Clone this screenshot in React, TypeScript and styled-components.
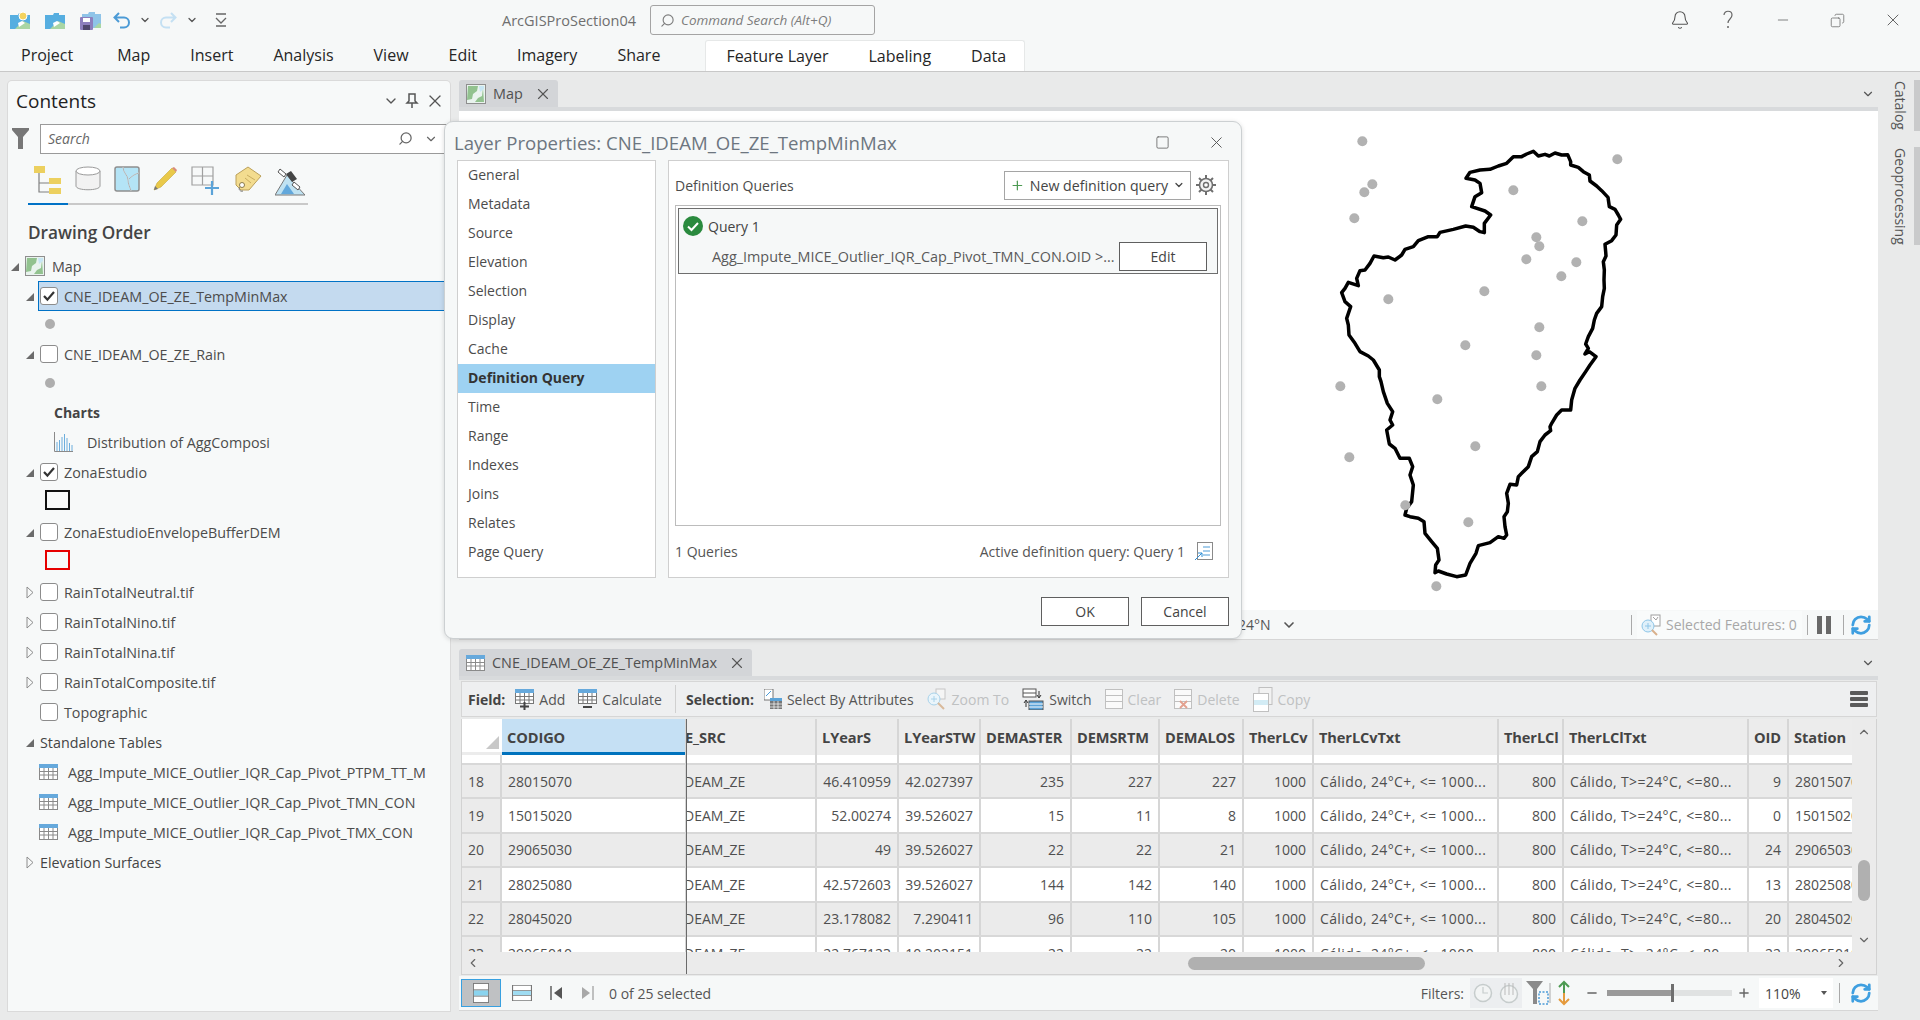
import React from "react";
import styled, { createGlobalStyle } from "styled-components";
import { Bell, ChevronDown, ChevronUp, ChevronLeft, ChevronRight, X, Search, Minus, Plus, RefreshCw, Square, Copy } from "lucide-react";

const GlobalStyle = createGlobalStyle`
  html, body { margin: 0; padding: 0; overflow: hidden; background: #e9eaea; }
  * { box-sizing: border-box; }
  body { font-family: "Open Sans", "Noto Sans", "Liberation Sans", sans-serif; font-size: 14px; color: #4c4c4c; }
`;

const Shell = styled.div`position: relative; width: 1920px; height: 1020px; display: flex; flex-direction: column; background: #e9eaea; overflow: hidden;`;

/* ---------- title bar and ribbon ---------- */
const TitleBar = styled.div`height: 40px; display: flex; align-items: center; background: #f6f8f8; padding-left: 10px;`;
const QuickAccess = styled.div`width: 492px; display: flex; align-items: center; gap: 15px;`;
const SmallCaret = styled.span<{ $ml?: number }>`display: flex; margin-left: ${(p) => p.$ml ?? 0}px; color: #555;`;
const ProjectName = styled.div`width: 148px; font-size: 14.5px; color: #6f6f6f; white-space: nowrap;`;
const CommandSearch = styled.div`width: 225px; height: 30px; display: flex; align-items: center; gap: 6px; padding-left: 9px; border: 1px solid #a4a4a4; border-radius: 3px; font-size: 13.5px; font-style: italic; color: #7d7d7d; white-space: nowrap;`;
const WindowButtons = styled.div`margin-left: auto; display: flex; align-items: center; color: #666;`;
const WindowButton = styled.span<{ $w: number }>`width: ${(p) => p.$w}px; display: flex; justify-content: center;`;

const Ribbon = styled.div`height: 32px; display: flex; align-items: flex-end; gap: 40px; padding-left: 21px; background: #f6f8f8; border-bottom: 1px solid #c8c8c8;`;
const RibbonTab = styled.div<{ $mr?: number }>`height: 31px; line-height: 31px; font-size: 16px; color: #262626; margin-right: ${(p) => p.$mr ?? 0}px;`;
const ContextGroup = styled.div`height: 31px; display: flex; gap: 40px; margin-left: 5px; padding: 0 18px 0 20px; background: #fff; border: 1px solid #e6e8e8; border-bottom: 0; border-radius: 3px 3px 0 0;`;

/* ---------- body ---------- */
const Body = styled.div`flex: 1; display: flex; gap: 9px; padding: 8px 0 9px 8px; min-height: 0;`;

/* ---------- contents pane ---------- */
const ContentsPane = styled.div`width: 442px; flex: none; margin-top: 1px; display: flex; flex-direction: column; background: #f7f9f9; border-radius: 4px 4px 0 0; box-shadow: 0 0 0 1px #dadada;`;
const PaneHeader = styled.div`height: 40px; display: flex; align-items: center; padding: 0 5px 0 8px; font-size: 19px; color: #222;`;
const PaneTitle = styled.div`flex: 1;`;
const PaneIcons = styled.div`display: flex; align-items: center; gap: 6px; color: #555;`;
const SearchRow = styled.div`height: 31px; margin-top: 2px; display: flex; align-items: center; padding-left: 4px; gap: 11px;`;
const SearchBox = styled.div`flex: 1; height: 30px; display: flex; align-items: center; padding: 0 11px 0 7px; background: #fff; border: 1px solid #9a9a9a; font-style: italic; font-size: 14px; color: #666;`;
const SearchLabel = styled.span`flex: 1;`;
const ViewTabs = styled.div`margin: 12px 0 0 20px; width: 280px; display: flex; gap: 13px; padding: 0 0 7px 6px; border-bottom: 2px solid #c9c9c9; position: relative;`;
const ViewTabMarker = styled.div`position: absolute; left: 0; bottom: -2px; width: 40px; height: 2px; background: #0072c6;`;
const Heading = styled.div`margin: 17px 0 0 20px; height: 22px; line-height: 22px; font-size: 17.2px; font-weight: 600; color: #444;`;
const Tree = styled.div`margin-top: 7px; display: flex; flex-direction: column;`;
const TreeRow = styled.div<{ $h?: number; $pl?: number }>`height: ${(p) => p.$h ?? 30}px; display: flex; align-items: center; padding-left: ${(p) => p.$pl ?? 17}px; white-space: nowrap; font-size: 14.3px; color: #4c4c4c;`;
const Expander = styled.span`width: 15px; flex: none; display: flex; align-items: center;`;
const RowBody = styled.div<{ $selected?: boolean }>`flex: 1; height: ${(p) => (p.$selected ? "30px" : "auto")}; display: flex; align-items: center; gap: 6px; margin-left: ${(p) => (p.$selected ? "-2px" : "0")}; padding-left: ${(p) => (p.$selected ? "1px" : "0")}; background: ${(p) => (p.$selected ? "#c4daef" : "transparent")}; border: ${(p) => (p.$selected ? "1px solid #0072c6" : "0")}; border-right: 0;`;
const CheckBox = styled.span`width: 18px; height: 18px; flex: none; display: flex; align-items: center; justify-content: center; background: #fff; border: 1px solid #8c8c8c; border-radius: 3px;`;
const GroupLabel = styled.span`font-weight: 500; color: #444;`;
const BoldLabel = styled.span`margin-left: 29px; font-size: 14px; font-weight: 700; color: #444;`;
const PointSymbol = styled.span`width: 10px; height: 10px; margin-left: 20px; border-radius: 50%; background: #aeaeae;`;
const FillSymbol = styled.span<{ $c: string }>`width: 25px; height: 20px; margin: -4px 0 0 20px; border: 2.5px solid ${(p) => p.$c};`;
const ItemLabelWithIcon = styled.span<{ $gap: number }>`display: flex; align-items: center; gap: ${(p) => p.$gap}px;`;

/* ---------- main column ---------- */
const MainColumn = styled.div`width: 1419px; flex: none; display: flex; flex-direction: column; gap: 9px;`;
const DockPane = styled.div`display: flex; flex-direction: column;`;
const TabRow = styled.div`height: 27px; display: flex; align-items: stretch; justify-content: space-between;`;
const DockTab = styled.div`display: flex; align-items: center; gap: 7px; padding: 0 6px 0 7px; background: #d3d5d8; border-radius: 3px 3px 0 0; font-size: 14.4px; color: #505050; white-space: nowrap;`;
const TabClose = styled.span`display: flex; margin-left: 4px; color: #555;`;
const TabMenu = styled.span`display: flex; align-items: center; padding-right: 3px; color: #555;`;
const TabStrip = styled.div`height: 4px; background: #d8dadc;`;
const MapView = styled.div`position: relative; height: 499px; background: #fff;`;
const MapDrawing = styled.svg`position: absolute; left: 841px; top: 9px;`;
const MapStatus = styled.div`height: 30px; display: flex; align-items: center; background: #f6f8f8; border-bottom: 1px solid #d6d6d6; padding-left: 779px; color: #555;`;
const CoordText = styled.span`width: 31px; white-space: nowrap;`;
const CoordMenu = styled.span`display: flex; margin-left: 12px; color: #555;`;
const StatusSep = styled.span<{ $ml?: number; $mr?: number }>`width: 1px; height: 20px; background: #a9a9a9; margin-left: ${(p) => p.$ml ?? 0}px; margin-right: ${(p) => p.$mr ?? 0}px;`;
const SelectedBox = styled.div`width: 165px; height: 28px; display: flex; align-items: center; gap: 5px; padding-left: 4px; background: #f9fbfb; color: #a8a8a8; white-space: nowrap;`;
const PauseBars = styled.span`display: flex; gap: 4px; margin-right: 12px;`;
const PauseBar = styled.span`width: 5px; height: 18px; background: #696969;`;

/* ---------- attribute table ---------- */
const Toolbar = styled.div`height: 36px; margin: 1px 1px 0 2px; display: flex; align-items: center; padding: 0 8px 0 6px; gap: 13px; background: #eeeff0; border: 1px solid #d6d6d6; white-space: nowrap;`;
const ToolLabel = styled.span`font-weight: 700; color: #444; margin-right: -3px;`;
const ToolButton = styled.span<{ $off?: boolean }>`display: flex; align-items: center; gap: 5px; color: ${(p) => (p.$off ? "#bfc1c2" : "#555")};`;
const ToolSep = styled.span`width: 1px; height: 28px; background: #d0d0d0; margin: 0 -3px 0 0;`;
const MenuLines = styled.span`margin-left: auto; display: flex; flex-direction: column; gap: 2px;`;
const MenuLine = styled.span`width: 18px; height: 4px; border-radius: 1px; background: #5a5a5a;`;

const GridFrame = styled.div`position: relative; height: 256px; margin: 2px 1px 0 2px; background: #ebebeb; border: 1px solid #d2d2d2; display: flex; flex-direction: column; border-top: 0;`;
const GridTop = styled.div`height: 233px; display: flex;`;
const GridBody = styled.div`width: 1392px; height: 233px; overflow: hidden;`;
const columns = "40px 185px 130px 82px 82px 91px 88px 84px 70px 185px 65px 185px 40px 65px";
const HeaderRow = styled.div`height: 36px; display: grid; grid-template-columns: ${columns}; background: #ececec;`;
const HeaderCell = styled.div<{ $active?: boolean; $clip?: boolean }>`display: flex; align-items: center; padding-left: 5px; padding-bottom: 1px; overflow: hidden; white-space: nowrap; font-size: 14.6px; font-weight: 700; color: #444; letter-spacing: -0.1px; border-right: 2px solid #d6d6d6; background: ${(p) => (p.$active ? "#c5e0f4" : "transparent")}; box-shadow: ${(p) => (p.$active ? "inset 0 -3px 0 #0072bd" : "none")}; text-indent: ${(p) => (p.$clip ? "-7px" : "0")};`;
const CornerCell = styled.div`position: relative; background: #fff; border-bottom: 3px solid #ececec;`;
const CornerMark = styled.span`position: absolute; right: 3px; bottom: 3px; border-style: solid; border-width: 0 0 13px 13px; border-color: transparent transparent #c8c8c8 transparent;`;
const Band = styled.div`height: 10px; display: grid; grid-template-columns: ${columns}; background: #fff; border-bottom: 2px solid #d8d8d8;`;
const BandCell = styled.div`border-right: 2px solid #d6d6d6;`;
const Row = styled.div<{ $odd: boolean }>`height: 34.4px; display: grid; grid-template-columns: ${columns}; background: ${(p) => (p.$odd ? "#ebebeb" : "#fff")}; border-bottom: 2px solid #d8d8d8;`;
const Cell = styled.div<{ $right?: boolean; $clip?: boolean; $head?: boolean; $wide?: boolean }>`display: flex; align-items: center; justify-content: ${(p) => (p.$right ? "flex-end" : "flex-start")}; padding: 0 6px; overflow: hidden; white-space: nowrap; color: #4f4f4f; border-right: 2px solid #d6d6d6; background: ${(p) => (p.$head ? "#ebebeb" : "transparent")}; text-indent: ${(p) => (p.$clip ? "-9px" : "0")}; letter-spacing: ${(p) => (p.$wide ? "0.38px" : "0")};`;
const VScroll = styled.div`width: 24px; display: flex; flex-direction: column; align-items: center; color: #666;`;
const VThumb = styled.div`width: 12px; height: 41px; margin-top: 121px; border-radius: 6px; background: #b0b0b0;`;
const VBottom = styled.span`display: flex; margin-top: 32px;`;
const VTop = styled.span`display: flex; margin-top: 6px;`;
const HScroll = styled.div`height: 22px; display: flex; align-items: center; padding-left: 4px; color: #666;`;
const HThumb = styled.div`width: 237px; height: 13px; margin-left: 708px; border-radius: 7px; background: #b0b0b0;`;
const HArrow = styled.span<{ $ml: number }>`display: flex; margin-left: ${(p) => p.$ml}px;`;
const FreezeLine = styled.div`position: absolute; left: 224px; top: 0; bottom: 0; width: 1px; background: #6a6a6a;`;

const TableStatus = styled.div`height: 35px; margin-top: 1px; display: flex; align-items: center; padding-left: 2px; background: #f6f8f8; border-bottom: 1px solid #d6d6d6; color: #555; white-space: nowrap;`;
const ViewToggle = styled.span`width: 40px; height: 28px; display: flex; align-items: center; justify-content: center; background: #bfc1c3; border: 1px solid #38a0e0;`;
const NavGroup = styled.span`display: flex; align-items: center; gap: 18px; margin-left: 11px;`;
const SelectionCount = styled.span`margin-left: 15px;`;
const FiltersLabel = styled.span`margin-left: auto;`;
const FilterPad = styled.span`width: 52px; height: 30px; margin-left: 6px; display: flex; align-items: center; justify-content: center; gap: 6px; background: #eceef0;`;
const ZoomSign = styled.span<{ $ml: number }>`display: flex; margin-left: ${(p) => p.$ml}px; color: #666;`;
const Slider = styled.span`position: relative; width: 125px; height: 6px; margin-left: 8px; background: #e0e2e2;`;
const SliderFill = styled.span`position: absolute; left: 0; top: 0; bottom: 0; background: #9a9a9a;`;
const SliderThumb = styled.span`position: absolute; top: -6px; width: 3px; height: 18px; background: #6f6f6f;`;
const ZoomBox = styled.span`width: 74px; height: 30px; margin-left: 8px; padding: 0 6px; display: flex; align-items: center; justify-content: space-between; background: #fff; color: #444;`;
const Caret = styled.span`width: 0; height: 0; border-left: 3px solid transparent; border-right: 3px solid transparent; border-top: 4px solid #555;`;

/* ---------- right dock ---------- */
const SideDock = styled.div`width: 33px; flex: none; display: flex; flex-direction: column; gap: 16px;`;
const SideTab = styled.div<{ $h: number }>`height: ${(p) => p.$h}px; display: flex; align-items: center; justify-content: center; border-right: 6px solid #c9cacb; writing-mode: vertical-rl; font-size: 14px; color: #555; white-space: nowrap;`;

/* ---------- dialog ---------- */
const Dialog = styled.div`position: absolute; left: 444px; top: 121px; width: 798px; height: 518px; display: flex; flex-direction: column; background: #f6f8f8; border: 1px solid #ccd0d2; border-radius: 9px; box-shadow: 0 1px 5px rgba(0,0,0,.14);`;
const DialogHeader = styled.div`height: 38px; display: flex; align-items: center; padding: 3px 15px 0 9px;`;
const DialogTitle = styled.div`flex: 1; font-size: 18.6px; color: #6d7680; white-space: nowrap;`;
const DialogTool = styled.span<{ $mr: number }>`display: flex; margin-right: ${(p) => p.$mr}px; color: #555;`;
const DialogBody = styled.div`height: 418px; display: flex; gap: 12px; padding: 0 12px;`;
const PageList = styled.div`width: 199px; display: flex; flex-direction: column; background: #fff; border: 1px solid #cfcfcf;`;
const PageItem = styled.div<{ $active?: boolean }>`height: 29px; flex: none; display: flex; align-items: center; padding: 0 0 2px 10px; color: ${(p) => (p.$active ? "#333" : "#4c4c4c")}; font-weight: ${(p) => (p.$active ? 700 : 400)}; background: ${(p) => (p.$active ? "#9ed2f2" : "transparent")};`;
const PagePanel = styled.div`flex: 1; display: flex; flex-direction: column; background: #fff; border: 1px solid #cfcfcf;`;
const PanelHead = styled.div`height: 44px; display: flex; align-items: center; padding: 4px 12px 0 6px;`;
const PanelTitle = styled.div`flex: 1;`;
const NewQueryButton = styled.div`width: 187px; height: 29px; display: flex; align-items: center; padding: 0 5px 0 5px; gap: 5px; background: #fff; border: 1px solid #a5a5a5; white-space: nowrap; color: #444;`;
const ButtonText = styled.span`flex: 1; font-size: 14.2px;`;
const GearWrap = styled.span`display: flex; margin-left: 5px;`;
const QueryBox = styled.div`height: 321px; margin: 0 7px 0 6px; padding: 2px; border: 1px solid #bcbcbc;`;
const QueryCard = styled.div`height: 66px; display: flex; flex-direction: column; padding: 0 10px 0 4px; background: #f6f8f8; border: 1px solid #6e6e6e;`;
const QueryTitleRow = styled.div`height: 32px; display: flex; align-items: center; gap: 5px; padding-top: 2px; font-weight: 500; color: #444;`;
const QueryTextRow = styled.div`height: 30px; display: flex; align-items: center; padding-left: 29px; font-size: 14.4px; color: #5a5a5a; white-space: nowrap;`;
const QueryText = styled.span`flex: 1;`;
const PlainButton = styled.div<{ $w: number }>`width: ${(p) => p.$w}px; height: 29px; flex: none; display: flex; align-items: center; justify-content: center; background: #fff; border: 1px solid #5f5f5f; font-size: 14px; color: #444;`;
const PanelFoot = styled.div`flex: 1; display: flex; align-items: center; justify-content: space-between; padding: 0 14px 0 6px; color: #555;`;
const ActiveQuery = styled.span`display: flex; align-items: center; gap: 9px;`;
const DialogFoot = styled.div`flex: 1; display: flex; justify-content: flex-end; gap: 12px; padding: 19px 12px 0 0;`;

/* ---------- drawings ---------- */
const ArrowDown = () => (
  <svg width="11" height="11" viewBox="0 0 11 11"><path d="M9 2v8H1z" fill="#6b6b6b" /></svg>
);
const ArrowRight = () => (
  <svg width="10" height="13" viewBox="0 0 10 13"><path d="M2 1l6 5.5L2 12z" fill="#f7f9f9" stroke="#8c8c8c" /></svg>
);
const Check = () => (
  <svg width="14" height="12" viewBox="0 0 14 12"><path d="M2 6l3.4 3.6L12 2" fill="none" stroke="#333" strokeWidth="2.2" /></svg>
);
const TableIcon = ({ w = 19, h = 16 }: { w?: number; h?: number }) => (
  <svg width={w} height={h} viewBox="0 0 19 16">
    <rect x=".5" y=".5" width="18" height="15" fill="#fff" stroke="#8a8a8a" />
    <rect x="0" y="0" width="19" height="4" fill="#66a9dc" />
    <path d="M0 7.5h19M0 11h19M5 4v12M9.5 4v12M14 4v12" stroke="#8a8a8a" />
  </svg>
);
const FieldIcon = ({ minus }: { minus?: boolean }) => (
  <svg width="19" height="21" viewBox="0 0 19 21">
    <rect x=".5" y=".5" width="18" height="14" fill="#fff" stroke="#777" />
    <rect x="0" y="0" width="19" height="4" fill="#66a9dc" />
    <path d="M0 7.5h19M0 11h19M5 4v11M9.5 4v11M14 4v11" stroke="#777" />
    {minus ? <path d="M5 18h9" stroke="#444" strokeWidth="2" /> : <path d="M5 17.5h9M9.5 13v8" stroke="#444" strokeWidth="2" />}
  </svg>
);
const MapGlyph = ({ s = 20 }: { s?: number }) => (
  <svg width={s} height={s} viewBox="0 0 20 20">
    <rect x=".5" y=".5" width="19" height="19" fill="#e9f3ee" stroke="#8e8e8e" />
    <path d="M2 2h10l-1 5-4 3-1 5-5 1z" fill="#92c28f" />
    <path d="M17 4l1 14H9l3-4 4-2z" fill="#92c28f" />
    <path d="M13 2h5v3l-4 3z" fill="#c7e6f4" />
  </svg>
);
const FolderIcon = ({ sun }: { sun?: boolean }) => (
  <svg width="20" height="18" viewBox="0 0 20 18">
    <path d="M0 4h8l1-2h5v2h6v14H0z" fill="#56aee0" />
    <path d="M5 18l8-8 7 3v5z" fill="#a9d6a4" />
    <path d="M8 12l4-2 3 2-6 4z" fill="#fff" />
    {sun && <circle cx="13" cy="5" r="4" fill="#f4d35e" stroke="#fff" />}
  </svg>
);
const SaveIcon = () => (
  <svg width="21" height="19" viewBox="0 0 21 19">
    <path d="M2 3h6l1-2h6v2h6v14H2z" fill="#8fc4e8" />
    <rect x="0" y="6" width="13" height="13" rx="1" fill="#8d7fbd" />
    <rect x="3" y="7" width="7" height="4" fill="#fff" />
    <rect x="3" y="14" width="7" height="5" fill="#50486d" />
    <path d="M14 17l5-5 2 1v4z" fill="#a9d6a4" />
  </svg>
);
const UndoIcon = ({ flip, c }: { flip?: boolean; c: string }) => (
  <svg width="18" height="18" viewBox="0 0 18 18" style={flip ? { transform: "scaleX(-1)" } : undefined}>
    <path d="M6 2L1.5 6.5 6 11M2 6.5h9a5 5 0 0 1 0 10H7" fill="none" stroke={c} strokeWidth="2" />
  </svg>
);
const QatIcon = () => (
  <svg width="12" height="14" viewBox="0 0 12 14"><path d="M1 1h10M1 5l5 5 5-5M1 13h10" fill="none" stroke="#666" strokeWidth="1.3" /></svg>
);
const FunnelIcon = () => (
  <svg width="17" height="21" viewBox="0 0 17 21"><path d="M0 0h17v2l-6 7v12H6V9L0 2z" fill="#777" /></svg>
);
const OrderIcon = () => (
  <svg width="28" height="29" viewBox="0 0 28 29">
    <rect x="0" y="0" width="11" height="7" fill="#ecd05f" />
    <path d="M5 7v19h10M5 17h10" fill="none" stroke="#808080" strokeWidth="1.2" />
    <rect x="15" y="12" width="12" height="6" fill="#ecd05f" />
    <rect x="15" y="22" width="12" height="6" fill="#ecd05f" />
  </svg>
);
const CylinderIcon = () => (
  <svg width="26" height="25" viewBox="0 0 26 25">
    <path d="M1 5v15c0 5 24 5 24 0V5" fill="#f2f2f2" stroke="#9a9a9a" />
    <ellipse cx="13" cy="5" rx="12" ry="4" fill="#fff" stroke="#9a9a9a" />
  </svg>
);
const SourceIcon = () => (
  <svg width="26" height="26" viewBox="0 0 26 26">
    <rect x="1" y="1" width="24" height="24" rx="2" fill="#b4e4f6" stroke="#8e8e8e" strokeWidth="1.5" />
    <path d="M9 1c0 6 5 8 5 13 0 4 2 7 3 11M15 13c3-3 6-5 10-6" fill="none" stroke="#fff" strokeWidth="1" />
    <path d="M9 1c0 6 5 8 5 13 0 4 2 7 3 11M15 13c3-3 6-5 10-6" fill="none" stroke="#7d7d7d" strokeWidth=".6" />
  </svg>
);
const PencilIcon = () => (
  <svg width="25" height="25" viewBox="0 0 25 25">
    <path d="M1 24l3-7L19 2l4 4L8 21z" fill="#e9c94a" stroke="#c8a93a" strokeWidth=".6" />
    <path d="M19 2l2-1 3 3-1 2z" fill="#d98c7a" />
    <path d="M1 24l1-4 3 3z" fill="#777" />
  </svg>
);
const GridPlusIcon = () => (
  <svg width="30" height="29" viewBox="0 0 30 29">
    <path d="M1 1h21v18H1zM11.5 1v18M1 10h21" fill="#f7f9f9" stroke="#a0a0a0" strokeWidth="1.2" />
    <path d="M21 15v14M14 22h14" stroke="#5ba3d8" strokeWidth="2.2" />
  </svg>
);
const TagIcon = () => (
  <svg width="28" height="27" viewBox="0 0 28 27">
    <path d="M14 1l13 9L15 24H7l-5-5V9z" fill="#f3dc8f" stroke="#bba05a" />
    <circle cx="8" cy="19" r="2.5" fill="#fff" stroke="#8a7a4a" />
    <path d="M13 9l8 5M11 12l6 5" stroke="#c9ad60" />
    <path d="M6 21c-2 2 0 5 3 4" fill="none" stroke="#777" />
  </svg>
);
const SatelliteIcon = () => (
  <svg width="30" height="30" viewBox="0 0 30 30">
    <path d="M0 29L12 9l6 7 12 13z" fill="#bfe2f2" stroke="#777" />
    <path d="M6 28l6-10 7 10z" fill="#62a8dc" />
    <path d="M5 3l6 5-2 3-6-5zM19 16l6 5-2 3-6-5z" fill="#fff" stroke="#555" />
    <path d="M11 8l5-3 6 8-5 3z" fill="#454545" />
  </svg>
);
const BarsIcon = () => (
  <svg width="19" height="20" viewBox="0 0 19 20">
    <path d="M.5 0v19.5H19" fill="none" stroke="#8a8a8a" />
    <path d="M3 10v9M5.5 8v11M8 5v14M10.5 2v17M13 6v13M15.5 11v8M18 13v6" stroke="#6caedd" strokeWidth="1" />
  </svg>
);
const CheckCircle = () => (
  <svg width="20" height="20" viewBox="0 0 20 20">
    <circle cx="10" cy="10" r="10" fill="#2a8a3e" />
    <path d="M5 10.5l3.5 3.5L15 7" fill="none" stroke="#fff" strokeWidth="2" />
  </svg>
);
const GearIcon = () => (
  <svg width="20" height="20" viewBox="0 0 20 20">
    <circle cx="10" cy="10" r="6.5" fill="#f3f3f3" stroke="#6f6f6f" strokeWidth="1.6" />
    <circle cx="10" cy="10" r="2.5" fill="#fff" stroke="#6f6f6f" strokeWidth="1.4" />
    <path d="M10 0v3.5M10 16.5V20M0 10h3.5M16.5 10H20M3 3l2.5 2.5M14.5 14.5L17 17M17 3l-2.5 2.5M5.5 14.5L3 17" stroke="#6f6f6f" strokeWidth="2" />
  </svg>
);
const ListArrowIcon = () => (
  <svg width="20" height="19" viewBox="0 0 20 19">
    <rect x="3.5" y=".5" width="15" height="17" fill="#fff" stroke="#8a8a8a" />
    <path d="M9 5h7M9 9h7M9 13h7" stroke="#4c9bd6" />
    <path d="M1 18l7-7M4 11h4v4" fill="none" stroke="#2f8fd6" />
  </svg>
);
const RowsIcon = ({ c = "#8ad4ef", w = 18, h = 22 }: { c?: string; w?: number; h?: number }) => (
  <svg width={w} height={h} viewBox="0 0 18 22" preserveAspectRatio="none">
    <rect x=".5" y=".5" width="17" height="21" fill="#fff" stroke="#777" />
    <rect x="1" y="8" width="16" height="6" fill={c} />
    <path d="M0 7.5h18M0 14.5h18" stroke="#777" />
  </svg>
);
const SelectAttrIcon = () => (
  <svg width="18" height="20" viewBox="0 0 18 20">
    <rect x="0" y="0" width="9" height="11" fill="#fff" stroke="#555" strokeWidth=".8" />
    <path d="M2 7l5-5" stroke="#4c9bd6" />
    <rect x="6" y="9" width="12" height="11" fill="#777" />
    <rect x="6" y="9" width="12" height="3" fill="#5ba3d8" />
    <path d="M6 15h12M6 18h12M10 12v8M14 12v8" stroke="#fff" strokeWidth=".7" />
  </svg>
);
const ZoomToIcon = () => (
  <svg width="20" height="22" viewBox="0 0 20 22">
    <rect x="9" y="1" width="9" height="10" fill="#f5f5f5" stroke="#c6c6c6" />
    <circle cx="7" cy="11" r="6" fill="#eaf5fb" stroke="#a8d2ea" />
    <path d="M7 8v6M4 11h6" stroke="#a8d2ea" />
    <path d="M11 15l6 6" stroke="#d9b99a" strokeWidth="2" />
  </svg>
);
const SwitchIcon = () => (
  <svg width="22" height="22" viewBox="0 0 22 22">
    <rect x="1" y="1" width="13" height="8" fill="#fff" stroke="#555" />
    <path d="M1 5h13" stroke="#555" />
    <rect x="7" y="13" width="14" height="9" fill="#5ba3d8" stroke="#555" />
    <path d="M7 16h14M7 19h14" stroke="#fff" />
    <path d="M17 3v6M15 7l2 3 2-3M4 19v-6M2 15l2-3 2 3" fill="none" stroke="#333" />
  </svg>
);
const LinesIcon = ({ del }: { del?: boolean }) => (
  <svg width="18" height="20" viewBox="0 0 18 20">
    <rect x=".5" y=".5" width="17" height="19" fill="#fafafa" stroke="#c0c0c0" />
    <path d="M0 6.5h18M0 12.5h18" stroke="#c0c0c0" />
    {del && <path d="M6 12l7 7M13 12l-7 7" stroke="#e3a18f" strokeWidth="1.8" />}
  </svg>
);
const CopyRowsIcon = () => (
  <svg width="20" height="25" viewBox="0 0 20 25">
    <rect x="6" y=".5" width="13" height="17" fill="#f2f2f2" stroke="#c0c0c0" />
    <rect x=".5" y="6.5" width="15" height="18" fill="#fff" stroke="#c0c0c0" />
    <rect x="1" y="13" width="14" height="5" fill="#d3ecf5" />
  </svg>
);
const SelectFeaturesIcon = () => (
  <svg width="20" height="22" viewBox="0 0 20 22">
    <rect x="10" y="1" width="9" height="11" fill="#fff" stroke="#a0a0a0" />
    <path d="M12 3l3 3 2-3" fill="none" stroke="#a0a0a0" />
    <circle cx="7" cy="12" r="6" fill="#dff0fa" stroke="#8fc6e8" />
    <path d="M7 9v6M4 12h6" stroke="#8fc6e8" />
    <path d="M11 16l5 5" stroke="#d9b08c" strokeWidth="2" />
  </svg>
);
const NavIcon = ({ c, flip }: { c: string; flip?: boolean }) => (
  <svg width="13" height="16" viewBox="0 0 13 16" style={flip ? { transform: "scaleX(-1)" } : undefined}>
    <path d="M1 1v14" stroke={c} strokeWidth="1.4" />
    <path d="M12 2v12L4 8z" fill={c} />
  </svg>
);
const ClockFilter = () => (
  <svg width="20" height="22" viewBox="0 0 20 22">
    <circle cx="10" cy="11" r="8.5" fill="#f2f4f4" stroke="#c6cccc" strokeWidth="1.5" />
    <path d="M10 5v6h5" fill="none" stroke="#c6cccc" strokeWidth="1.2" />
  </svg>
);
const RangeFilter = () => (
  <svg width="20" height="22" viewBox="0 0 20 22">
    <circle cx="10" cy="12" r="8.5" fill="#f2f4f4" stroke="#c6cccc" strokeWidth="1.5" />
    <path d="M6 1v12M10 1v12M14 1v12" stroke="#bbb" />
  </svg>
);
const TableFilter = () => (
  <svg width="25" height="26" viewBox="0 0 25 26">
    <path d="M0 1h17l-6 8v15H7V9z" fill="#8a8a8a" />
    <path d="M13 12h9v12h-9z" fill="none" stroke="#4c9bd6" strokeDasharray="2 1.5" strokeWidth="1.5" />
    <path d="M24 3v20" stroke="#aaa" />
  </svg>
);
const SortFilter = () => (
  <svg width="14" height="26" viewBox="0 0 14 26">
    <path d="M7 13V2M2 7l5-5 5 5" fill="none" stroke="#4d9a52" strokeWidth="2" />
    <path d="M7 13v11M2 19l5 5 5-5" fill="none" stroke="#e59a3c" strokeWidth="2" />
  </svg>
);

const boundary = "498,175 510,157 540,150 570,148 595,138 620,130 640,110 665,110 680,102 700,94 715,108 735,103 748,108 765,99 785,105 803,104 812,125 812,135 835,142 850,155 868,165 870,183 890,198 905,212 924,232 928,260 945,268 955,285 962,298 950,315 948,345 935,362 915,373 917,395 918,408 910,425 913,450 912,480 913,505 908,530 905,560 890,580 883,600 878,625 865,650 857,672 865,685 855,702 868,695 888,710 870,735 857,755 840,780 825,805 815,840 812,870 785,870 770,885 755,910 750,920 752,932 735,945 720,965 712,995 695,1010 685,1040 665,1060 655,1070 650,1095 630,1093 620,1120 625,1150 622,1175 612,1190 615,1220 620,1245 612,1255 595,1250 570,1268 535,1277 528,1300 510,1330 497,1365 470,1370 440,1362 415,1353 405,1358 407,1335 417,1320 412,1285 395,1265 375,1240 372,1205 355,1195 330,1190 315,1185 320,1165 335,1145 340,1095 330,1065 338,1040 328,1015 300,1015 285,985 268,972 260,930 278,915 270,900 278,875 262,850 250,815 243,785 238,770 238,750 220,720 205,708 180,695 165,670 147,645 145,615 140,595 152,560 135,545 125,518 135,505 145,487 175,497 170,475 180,452 195,450 210,430 222,408 250,413 265,411 285,420 305,405 315,388 340,380 355,362 385,350 412,350 420,337 460,328 497,318 520,322 540,335 553,338 553,310 572,285 555,273 515,260 525,230 545,218 540,190 525,180";
const stations: [number, number][] = [[187,64],[217,193],[193,217],[163,295],[952,118],[640,211],[847,304],[709,352],[718,379],[679,418],[829,427],[784,469],[553,514],[265,538],[718,622],[496,676],[709,706],[121,799],[724,799],[412,838],[148,1012],[526,979],[316,1156],[505,1207],[409,1399]];

const pages = ["General","Metadata","Source","Elevation","Selection","Display","Cache","Definition Query","Time","Range","Indexes","Joins","Relates","Page Query"];
const headers = ["CODIGO","E_SRC","LYearS","LYearSTW","DEMASTER","DEMSRTM","DEMALOS","TherLCv","TherLCvTxt","TherLCl","TherLClTxt","OID","Station"];
const rows = [
  ["18","28015070","46.410959","42.027397","235","227","227","9"],
  ["19","15015020","52.00274","39.526027","15","11","8","0"],
  ["20","29065030","49","39.526027","22","22","21","24"],
  ["21","28025080","42.572603","39.526027","144","142","140","13"],
  ["22","28045020","23.178082","7.290411","96","110","105","20"],
  ["23","29065010","22.767123","10.202151","22","22","20","22"],
];

const Layer = ({ name, checked, open, selected }: { name: string; checked?: boolean; open?: boolean; selected?: boolean }) => (
  <TreeRow>
    <Expander>{open === undefined ? null : open ? <ArrowDown /> : <ArrowRight />}</Expander>
    <RowBody $selected={selected}>
      <CheckBox>{checked && <Check />}</CheckBox>
      <span>{name}</span>
    </RowBody>
  </TreeRow>
);

const StandaloneRow = ({ name }: { name: string }) => (
  <TreeRow $pl={31}>
    <ItemLabelWithIcon $gap={10}><TableIcon /><span>{name}</span></ItemLabelWithIcon>
  </TreeRow>
);

const ContentsPanel = () => (
  <ContentsPane>
    <PaneHeader>
      <PaneTitle>Contents</PaneTitle>
      <PaneIcons>
        <ChevronDown size={16} />
        <svg width="14" height="16" viewBox="0 0 14 16"><path d="M4 1h6v7l2 2H2l2-2zM7 10v5" fill="none" stroke="#555" strokeWidth="1.5" /></svg>
        <X size={20} strokeWidth={1.5} />
      </PaneIcons>
    </PaneHeader>
    <SearchRow>
      <FunnelIcon />
      <SearchBox>
        <SearchLabel>Search</SearchLabel>
        <Search size={15} strokeWidth={2} style={{ transform: "scaleX(-1)", marginRight: 11 }} />
        <ChevronDown size={14} />
      </SearchBox>
    </SearchRow>
    <ViewTabs>
      <OrderIcon /><CylinderIcon /><SourceIcon /><PencilIcon /><GridPlusIcon /><TagIcon /><SatelliteIcon />
      <ViewTabMarker />
    </ViewTabs>
    <Heading>Drawing Order</Heading>
    <Tree>
      <TreeRow $pl={2}>
        <Expander><ArrowDown /></Expander>
        <ItemLabelWithIcon $gap={7}><MapGlyph /><span>Map</span></ItemLabelWithIcon>
      </TreeRow>
      <Layer name="CNE_IDEAM_OE_ZE_TempMinMax" checked open selected />
      <TreeRow $h={26}><PointSymbol /></TreeRow>
      <TreeRow $h={2} />
      <Layer name="CNE_IDEAM_OE_ZE_Rain" open />
      <TreeRow $h={28}><PointSymbol /></TreeRow>
      <TreeRow $h={30}><BoldLabel>Charts</BoldLabel></TreeRow>
      <TreeRow $pl={46}><ItemLabelWithIcon $gap={14}><BarsIcon /><span>Distribution of AggComposi</span></ItemLabelWithIcon></TreeRow>
      <Layer name="ZonaEstudio" checked open />
      <TreeRow><FillSymbol $c="#111" /></TreeRow>
      <Layer name="ZonaEstudioEnvelopeBufferDEM" open />
      <TreeRow><FillSymbol $c="#e60000" /></TreeRow>
      <Layer name="RainTotalNeutral.tif" open={false} />
      <Layer name="RainTotalNino.tif" open={false} />
      <Layer name="RainTotalNina.tif" open={false} />
      <Layer name="RainTotalComposite.tif" open={false} />
      <Layer name="Topographic" />
      <TreeRow><Expander><ArrowDown /></Expander><GroupLabel>Standalone Tables</GroupLabel></TreeRow>
      <StandaloneRow name="Agg_Impute_MICE_Outlier_IQR_Cap_Pivot_PTPM_TT_M" />
      <StandaloneRow name="Agg_Impute_MICE_Outlier_IQR_Cap_Pivot_TMN_CON" />
      <StandaloneRow name="Agg_Impute_MICE_Outlier_IQR_Cap_Pivot_TMX_CON" />
      <TreeRow><Expander><ArrowRight /></Expander><GroupLabel>Elevation Surfaces</GroupLabel></TreeRow>
    </Tree>
  </ContentsPane>
);

const MapPanel = () => (
  <DockPane>
    <TabRow>
      <DockTab>
        <MapGlyph />
        <span>Map</span>
        <TabClose><X size={18} strokeWidth={1.5} /></TabClose>
      </DockTab>
      <TabMenu><ChevronDown size={14} /></TabMenu>
    </TabRow>
    <TabStrip />
    <MapView>
      <MapDrawing width="380" height="480" viewBox="0 0 1140 1440">
        <polygon points={boundary} fill="none" stroke="#000" strokeWidth="10.5" strokeLinejoin="round" />
        {stations.map(([x, y], i) => <circle key={i} cx={x} cy={y} r="15" fill="#b2b2b2" />)}
      </MapDrawing>
    </MapView>
    <MapStatus>
      <CoordText>24°N</CoordText>
      <CoordMenu><ChevronDown size={16} strokeWidth={2.5} /></CoordMenu>
      <StatusSep $ml={334} $mr={5} />
      <SelectedBox><SelectFeaturesIcon />Selected Features: 0</SelectedBox>
      <StatusSep $ml={5} $mr={9} />
      <PauseBars><PauseBar /><PauseBar /></PauseBars>
      <StatusSep $mr={6} />
      <RefreshCw size={22} strokeWidth={3} color="#3f9fe0" />
    </MapStatus>
  </DockPane>
);

const TablePanel = () => (
  <DockPane>
    <TabRow>
      <DockTab>
        <TableIcon />
        <span>CNE_IDEAM_OE_ZE_TempMinMax</span>
        <TabClose><X size={18} strokeWidth={1.5} /></TabClose>
      </DockTab>
      <TabMenu><ChevronDown size={14} /></TabMenu>
    </TabRow>
    <TabStrip />
    <Toolbar>
      <ToolLabel>Field:</ToolLabel>
      <ToolButton><FieldIcon />Add</ToolButton>
      <ToolButton><FieldIcon minus />Calculate</ToolButton>
      <ToolSep />
      <ToolLabel>Selection:</ToolLabel>
      <ToolButton><SelectAttrIcon />Select By Attributes</ToolButton>
      <ToolButton $off><ZoomToIcon />Zoom To</ToolButton>
      <ToolButton><SwitchIcon />Switch</ToolButton>
      <ToolButton $off><LinesIcon />Clear</ToolButton>
      <ToolButton $off><LinesIcon del />Delete</ToolButton>
      <ToolButton $off><CopyRowsIcon />Copy</ToolButton>
      <MenuLines><MenuLine /><MenuLine /><MenuLine /></MenuLines>
    </Toolbar>
    <GridFrame>
      <GridTop>
        <GridBody>
          <HeaderRow>
            <CornerCell><CornerMark /></CornerCell>
            {headers.map((h, i) => <HeaderCell key={h} $active={i === 0} $clip={i === 1}>{h}</HeaderCell>)}
          </HeaderRow>
          <Band>{Array.from({ length: 14 }, (_, i) => <BandCell key={i} />)}</Band>
          {rows.map((r, i) => (
            <Row key={r[0]} $odd={i % 2 === 0}>
              <Cell $head>{r[0]}</Cell>
              <Cell>{r[1]}</Cell>
              <Cell $clip>DEAM_ZE</Cell>
              <Cell $right>{r[2]}</Cell>
              <Cell $right>{r[3]}</Cell>
              <Cell $right>{r[4]}</Cell>
              <Cell $right>{r[5]}</Cell>
              <Cell $right>{r[6]}</Cell>
              <Cell $right>1000</Cell>
              <Cell $wide>Cálido, 24°C+, &lt;= 1000...</Cell>
              <Cell $right>800</Cell>
              <Cell $wide>Cálido, T&gt;=24°C, &lt;=80...</Cell>
              <Cell $right>{r[7]}</Cell>
              <Cell>{r[1]}</Cell>
            </Row>
          ))}
        </GridBody>
        <VScroll>
          <VTop><ChevronUp size={14} /></VTop>
          <VThumb />
          <VBottom><ChevronDown size={14} /></VBottom>
        </VScroll>
      </GridTop>
      <HScroll>
        <ChevronLeft size={14} />
        <HThumb />
        <HArrow $ml={409}><ChevronRight size={14} /></HArrow>
      </HScroll>
      <FreezeLine />
    </GridFrame>
    <TableStatus>
      <ViewToggle><RowsIcon w={16} h={20} /></ViewToggle>
      <NavGroup>
        <RowsIcon c="#9fdcf2" w={20} h={16} />
        <NavIcon c="#555" />
        <NavIcon c="#a8a8a8" flip />
      </NavGroup>
      <SelectionCount>0 of 25 selected</SelectionCount>
      <FiltersLabel>Filters:</FiltersLabel>
      <FilterPad><ClockFilter /><RangeFilter /></FilterPad>
      <ZoomSign $ml={4}><TableFilter /></ZoomSign>
      <ZoomSign $ml={6}><SortFilter /></ZoomSign>
      <ZoomSign $ml={14}><Minus size={14} strokeWidth={2.5} /></ZoomSign>
      <Slider>
        <SliderFill style={{ width: "52%" }} />
        <SliderThumb style={{ left: "51%" }} />
      </Slider>
      <ZoomSign $ml={5}><Plus size={14} strokeWidth={2.5} /></ZoomSign>
      <ZoomBox>110%<Caret /></ZoomBox>
      <StatusSep $ml={6} $mr={10} />
      <RefreshCw size={22} strokeWidth={3} color="#3f9fe0" style={{ marginRight: 6 }} />
    </TableStatus>
  </DockPane>
);

const PropertiesDialog = () => (
  <Dialog>
    <DialogHeader>
      <DialogTitle>Layer Properties: CNE_IDEAM_OE_ZE_TempMinMax</DialogTitle>
      <DialogTool $mr={37}><Square size={15} strokeWidth={1.2} /></DialogTool>
      <DialogTool $mr={0}><X size={19} strokeWidth={1.2} /></DialogTool>
    </DialogHeader>
    <DialogBody>
      <PageList>
        {pages.map((p) => <PageItem key={p} $active={p === "Definition Query"}>{p}</PageItem>)}
      </PageList>
      <PagePanel>
        <PanelHead>
          <PanelTitle>Definition Queries</PanelTitle>
          <NewQueryButton>
            <Plus size={15} color="#4d9a52" strokeWidth={2} />
            <ButtonText>New definition query</ButtonText>
            <ChevronDown size={12} strokeWidth={2.5} />
          </NewQueryButton>
          <GearWrap><GearIcon /></GearWrap>
        </PanelHead>
        <QueryBox>
          <QueryCard>
            <QueryTitleRow><CheckCircle />Query 1</QueryTitleRow>
            <QueryTextRow>
              <QueryText>Agg_Impute_MICE_Outlier_IQR_Cap_Pivot_TMN_CON.OID &gt;...</QueryText>
              <PlainButton $w={88}>Edit</PlainButton>
            </QueryTextRow>
          </QueryCard>
        </QueryBox>
        <PanelFoot>
          <span>1 Queries</span>
          <ActiveQuery>Active definition query: Query 1<ListArrowIcon /></ActiveQuery>
        </PanelFoot>
      </PagePanel>
    </DialogBody>
    <DialogFoot>
      <PlainButton $w={88}>OK</PlainButton>
      <PlainButton $w={88}>Cancel</PlainButton>
    </DialogFoot>
  </Dialog>
);

export default function App() {
  return (
    <Shell>
      <GlobalStyle />
      <TitleBar>
        <QuickAccess>
          <FolderIcon sun />
          <FolderIcon />
          <SaveIcon />
          <SmallCaret $ml={-3}><UndoIcon c="#4c9bd6" /></SmallCaret>
          <SmallCaret $ml={-7}><ChevronDown size={12} strokeWidth={2.5} /></SmallCaret>
          <SmallCaret $ml={-7}><UndoIcon flip c="#c4e0f3" /></SmallCaret>
          <SmallCaret $ml={-6}><ChevronDown size={12} strokeWidth={2.5} /></SmallCaret>
          <SmallCaret $ml={2}><QatIcon /></SmallCaret>
        </QuickAccess>
        <ProjectName>ArcGISProSection04</ProjectName>
        <CommandSearch>
          <Search size={15} strokeWidth={1.8} style={{ transform: "scaleX(-1)" }} />
          Command Search (Alt+Q)
        </CommandSearch>
        <WindowButtons>
          <WindowButton $w={40}><Bell size={20} strokeWidth={1.3} color="#555" /></WindowButton>
          <WindowButton $w={55}><svg width="12" height="20" viewBox="0 0 12 20"><path d="M2 5c0-5 8-5 8 0 0 4-4 4-4 8" fill="none" stroke="#666" strokeWidth="1.2" /><circle cx="6" cy="17" r="1" fill="#666" /></svg></WindowButton>
          <WindowButton $w={55}><Minus size={16} strokeWidth={1.2} /></WindowButton>
          <WindowButton $w={55}><Copy size={15} strokeWidth={1.2} style={{ transform: "scaleX(-1)" }} /></WindowButton>
          <WindowButton $w={55}><X size={20} strokeWidth={1.2} /></WindowButton>
        </WindowButtons>
      </TitleBar>
      <Ribbon>
        {["Project","Map","Insert","Analysis","View","Edit","Imagery","Share"].map((t, i) => <RibbonTab key={t} $mr={i === 0 ? 4 : 0}>{t}</RibbonTab>)}
        <ContextGroup>
          {["Feature Layer","Labeling","Data"].map((t) => <RibbonTab key={t}>{t}</RibbonTab>)}
        </ContextGroup>
      </Ribbon>
      <Body>
        <ContentsPanel />
        <MainColumn>
          <MapPanel />
          <TablePanel />
        </MainColumn>
        <SideDock>
          <SideTab $h={51}>Catalog</SideTab>
          <SideTab $h={98}>Geoprocessing</SideTab>
        </SideDock>
      </Body>
      <PropertiesDialog />
    </Shell>
  );
}
